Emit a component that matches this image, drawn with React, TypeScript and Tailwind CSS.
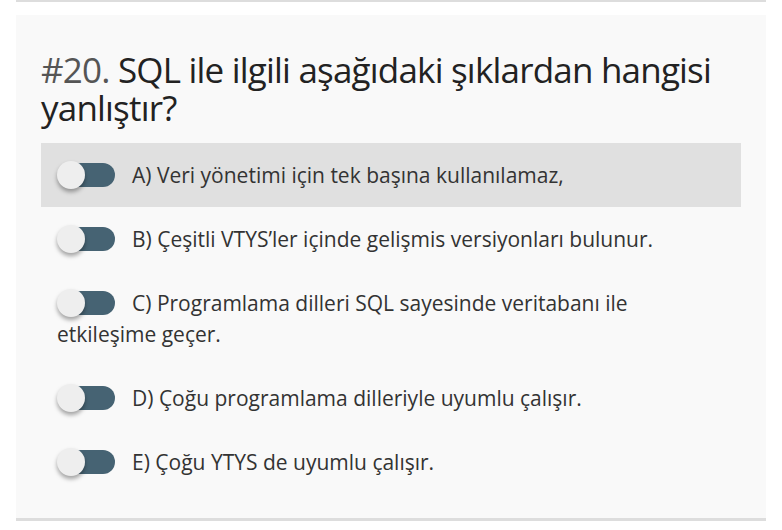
import React, { useState } from 'react';

// Toggle switch shown before each answer
const Toggle: React.FC<{ checked: boolean; onChange: () => void }> = ({ checked, onChange }) => {
    return (
        <span
            onClick={onChange}
            className="relative inline-block align-middle w-[58px] h-[26px] mr-[17px] -mt-[4px] cursor-pointer"
        >
            <span className="absolute left-[4px] right-0 top-[1px] bottom-[1px] rounded-full bg-[#466373]" />
            <span
                className={`absolute top-0 h-[28px] w-[28px] -mt-[1px] rounded-full bg-[#eeeeee] shadow-[0_3px_4px_rgba(0,0,0,0.35)] transition-all ${checked ? 'left-[30px]' : 'left-0'}`}
            />
        </span>
    );
};

const options = [
    'A) Veri yönetimi için tek başına kullanılamaz,',
    'B) Çeşitli VTYS’ler içinde gelişmis versiyonları bulunur.',
    'C) Programlama dilleri SQL sayesinde veritabanı ile etkileşime geçer.',
    'D) Çoğu programlama dilleriyle uyumlu çalışır.',
    'E) Çoğu YTYS de uyumlu çalışır.',
];

const App: React.FC = () => {
    const [selected, setSelected] = useState<number | null>(null);
    const hovered = 0;

    return (
        <div className="min-h-[530px] bg-white pl-4 font-['Open_Sans',sans-serif]">
            <div className="w-[750px]">
                <div className="h-[2px] bg-[#dddddd]" />
                <div className="mt-[13px] h-[503px] bg-[#f9f9f9] px-[25px] pt-[36px]">
                    <h2 className="text-[35px] leading-[38px] tracking-[-0.8px] text-[#222222] font-normal">
                        <span className="text-[#555555]">#20.</span> SQL ile ilgili aşağıdaki şıklardan hangisi yanlıştır?
                    </h2>
                    <div className="mt-[16px]">
                        {options.map((opt, i) => (
                            <div
                                key={i}
                                className={`px-4 pt-[17px] pb-[16px] text-[21px] leading-[31px] text-[#333333] ${i === hovered ? 'bg-[#e0e0e0]' : ''}`}
                            >
                                <Toggle checked={selected === i} onChange={() => setSelected(i)} />
                                {opt}
                            </div>
                        ))}
                    </div>
                </div>
                <div className="h-[3px] bg-[#dddddd]" />
            </div>
        </div>
    );
};

export default App;
